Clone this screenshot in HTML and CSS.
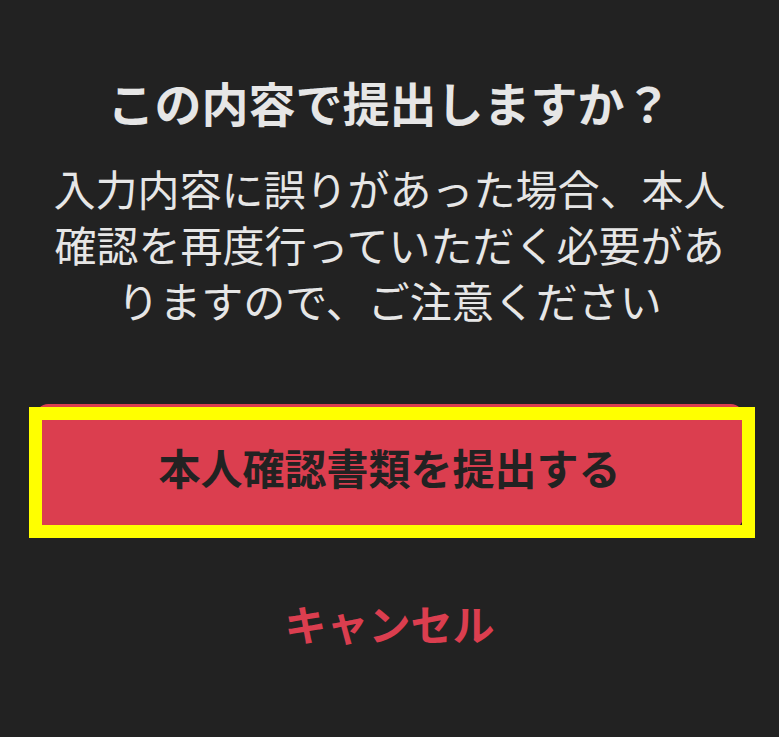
FILE: index.html
```html
<!DOCTYPE html>
<html lang="ja">
<head>
<meta charset="utf-8">
<title>確認</title>
<link rel="stylesheet" href="styles.css">
</head>
<body>
<div class="dialog">
  <h1 class="title">この内容で提出しますか？</h1>
  <p class="message">入力内容に誤りがあった場合、本人確認を再度行っていただく必要がありますので、ご注意ください</p>
  <div class="actions">
    <button class="submit" type="button">本人確認書類を提出する<span class="highlight"></span></button>
    <button class="cancel" type="button">キャンセル</button>
  </div>
</div>
</body>
</html>
```
FILE: styles.css
```css
html, body {
  margin: 0;
  padding: 0;
  background: #222222;
}
body {
  width: 779px;
  height: 737px;
  overflow: hidden;
  font-family: "Noto Sans CJK JP", "Noto Sans", sans-serif;
}
.dialog {
  padding: 74px 36px 0;
  display: flex;
  flex-direction: column;
  align-items: stretch;
}
.title {
  margin: 0 -10px;
  font-size: 47px;
  line-height: 56px;
  font-weight: 700;
  color: #e6e6e6;
  text-align: center;
}
.message {
  margin: 30px 0 0;
  font-size: 42px;
  line-height: 56px;
  font-weight: 400;
  color: #e6e6e6;
  text-align: center;
}
.actions {
  margin-top: 76px;
  display: flex;
  flex-direction: column;
  align-items: stretch;
}
.submit {
  position: relative;
  height: 125px;
  border: none;
  border-radius: 12px;
  background: #db3e4f;
  color: #222222;
  font-family: inherit;
  font-size: 42px;
  font-weight: 700;
  padding: 0;
}
.highlight {
  position: absolute;
  top: 3px;
  left: -7px;
  right: -12px;
  bottom: -9px;
  border: 13px solid #ffff00;
  pointer-events: none;
}
.cancel {
  margin-top: 66px;
  border: none;
  background: transparent;
  color: #db3e4f;
  font-family: inherit;
  font-size: 42px;
  line-height: 56px;
  font-weight: 700;
  padding: 0;
}
```
